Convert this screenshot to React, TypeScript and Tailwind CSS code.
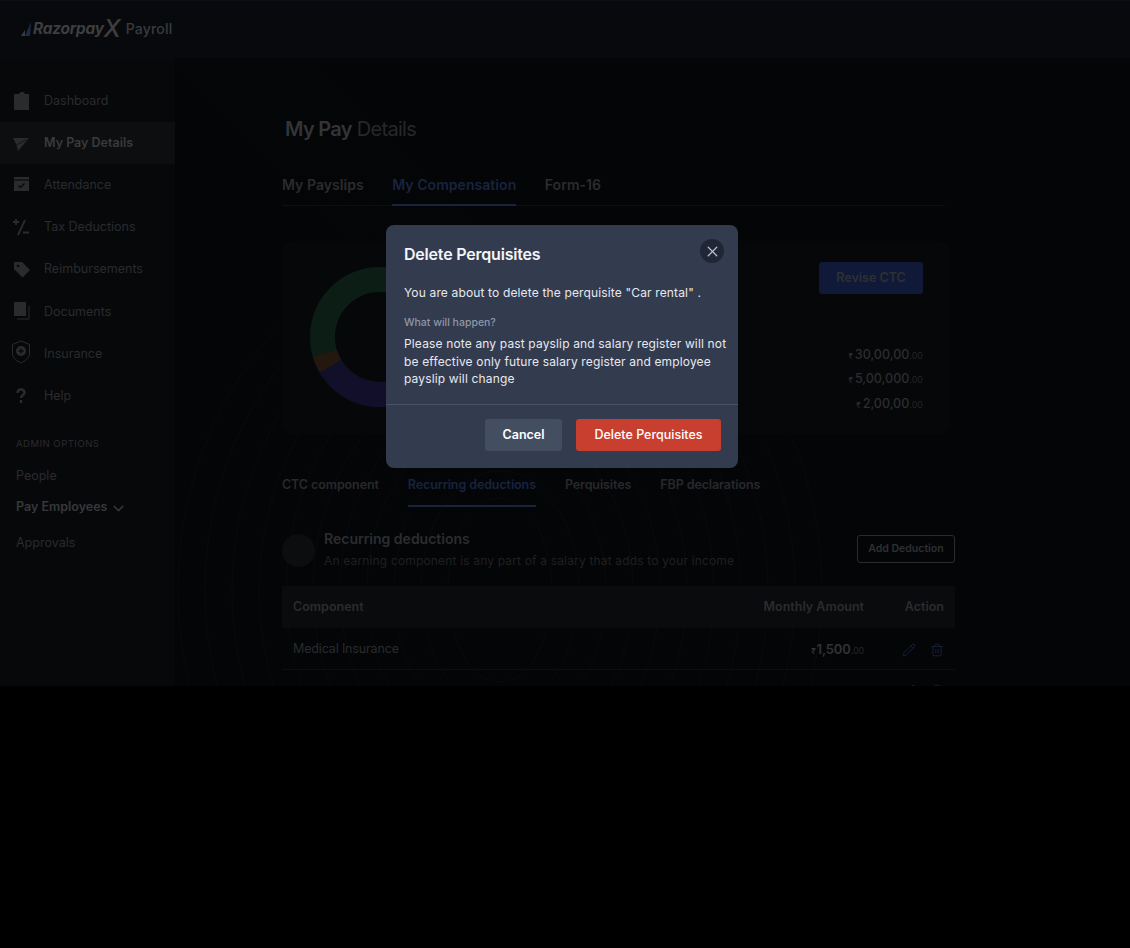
import { Pencil, Trash2, X, ChevronDown } from "lucide-react";

const NAV = [
  { label: "Dashboard", icon: "clipboard" },
  { label: "My Pay Details", icon: "plane", active: true },
  { label: "Attendance", icon: "calendar" },
  { label: "Tax Deductions", icon: "tax" },
  { label: "Reimbursements", icon: "tag" },
  { label: "Documents", icon: "docs" },
  { label: "Insurance", icon: "shield" },
  { label: "Help", icon: "help" },
];

const AMOUNTS = [
  { value: "30,00,00" },
  { value: "5,00,000" },
  { value: "2,00,00" },
];

const RINGS = [322, 295, 268, 241, 214, 187, 160, 133, 106, 79, 52];
const HATCH = [0, 14, 28, 42, 56, 70, 84, 98, 112, 126];

function NavIcon({ name }: { name: string }) {
  const c = "#2a2b2d";
  return (
    <svg width="22" height="22" viewBox="0 0 22 22" fill="none" className="overflow-visible">
      {name === "clipboard" && <path d="M3 4h5l1.500-2h3L14 4h4v16H3z" fill={c} />}
      {name === "plane" && (
        <>
          <path d="M2 6h16L7 19l-1.500-6z" fill={c} />
          <path d="M5.500 13L15 7.500" stroke="#0d0e10" strokeWidth="0.8" />
        </>
      )}
      {name === "calendar" && (
        <>
          <path d="M3 3h15v14H3z" fill={c} />
          <path d="M3 6h15" stroke="#08090b" strokeWidth="1.200" />
          <path d="M7.500 11.500l2 2 4-4" stroke="#08090b" strokeWidth="1.400" />
        </>
      )}
      {name === "tax" && <path d="M2 5h6M5 2v6M14 3L7 18M12 15.500h6" stroke={c} strokeWidth="1.800" />}
      {name === "tag" && (
        <>
          <path d="M3 3h8l8 8-7.500 7.500L3 10z" fill={c} />
          <circle cx="7" cy="7" r="1.300" fill="#08090b" />
        </>
      )}
      {name === "docs" && (
        <>
          <path d="M3 1h12v14H3z" fill={c} />
          <path d="M18 5v13H6" stroke={c} strokeWidth="1" />
        </>
      )}
      {name === "shield" && (
        <>
          <path d="M10 -2l8.500 3.500v9c0 4.500-4.500 7.500-8.500 9.500-4-2-8.500-5-8.500-9.500v-9z" stroke={c} strokeWidth="1" />
          <circle cx="10" cy="8" r="5" fill={c} />
          <path d="M10 5.500v5M7.500 8h5" stroke="#08090b" strokeWidth="1.300" />
        </>
      )}
      {name === "help" && (
        <path d="M6.500 8c0-2.500 1.500-3.500 3.500-3.500s3.500 1.200 3.500 3.300c0 2.500-3.500 2.500-3.500 5.200M10 15v3" stroke={c} strokeWidth="2.400" />
      )}
    </svg>
  );
}

function Amount({ value }: { value: string }) {
  return (
    <div className="h-[24.500px] flex items-baseline justify-end text-[#2c2d2f] font-medium text-[12.500px] leading-[24.500px]">
      <span className="text-[8px] mr-[2px]">₹</span>
      <span>{value}</span>
      <span className="text-[9px] font-normal text-[#242527]">.00</span>
    </div>
  );
}

export default function App() {
  return (
    <div className="relative h-[948px] bg-black overflow-hidden font-['Inter',sans-serif]">
      <div className="h-[686px] overflow-hidden bg-[#040507] flex flex-col">
        <header className="h-[58px] shrink-0 bg-[#08090c] border-t border-[#0c0e15] flex items-center pl-[21px] pb-[2px]">
          <svg width="11" height="16" viewBox="0 0 11 16" className="mr-[1px]">
            <path d="M0 15l4-6v6z" fill="#3a3b3e" />
            <path d="M4 15L10 1l-1 14z" fill="#1e2b44" />
          </svg>
          <span className="text-[15.400px] font-bold italic text-[#3d3e40] tracking-[-0.2px]">Razorpay</span>
          <span className="text-[24px] leading-none font-medium italic text-[#3d3e40] mr-[5px]">X</span>
          <span className="text-[14px] font-medium text-[#3a3b3d] tracking-[0.2px]">Payroll</span>
        </header>
        <div className="flex flex-1 min-h-0">
          <aside className="w-[175px] shrink-0 bg-[#07080a] pt-[22px]">
            <nav>
              {NAV.map((item) => (
                <div
                  key={item.label}
                  className={`h-[42.200px] flex items-center pl-[11px] gap-[11px] text-[12.500px] ${
                    item.active ? "bg-[#0d0e10] text-[#3a3b3d] font-semibold" : "text-[#2a2b2d]"
                  }`}
                >
                  <NavIcon name={item.icon} />
                  <span>{item.label}</span>
                </div>
              ))}
            </nav>
            <div className="pl-[16px] pt-[18px] text-[#2a2b2d]">
              <p className="text-[9.500px] tracking-[0.5px] leading-[16px]">ADMIN OPTIONS</p>
              <p className="text-[12.500px] mt-[16px] leading-[16px]">People</p>
              <div className="flex items-center mt-[16px] h-[16px] gap-[3px] font-semibold text-[12.500px] text-[#37383a]">
                Pay Employees <ChevronDown size={17} strokeWidth={2} className="mt-[2px]" />
              </div>
              <p className="text-[12.500px] mt-[19px] leading-[16px]">Approvals</p>
            </div>
          </aside>
          <main className="relative flex-1 pl-[107px] overflow-hidden">
            <svg className="absolute inset-0 w-full h-full" viewBox="0 0 955 628" fill="none" stroke="#090a0c">
              {RINGS.map((r) => (
                <ellipse key={r} cx="325" cy="532" rx={r} ry={r + 40} />
              ))}
              {HATCH.map((d) => (
                <path key={d} d={`M${d} 0L${d + 180} 180`} stroke="#08090b" strokeWidth="0.600" />
              ))}
            </svg>
            <div className="relative w-[673px]">
              <h1 className="pt-[57px] pl-[3px] text-[20px] leading-[28px] tracking-[-0.7px] text-[#27282a]">
                <span className="font-semibold text-[#333436]">My Pay</span> Details
              </h1>
              <div className="mt-[27px] w-[663px] flex gap-[28.500px] border-b border-[#0e0f12] h-[36px] text-[14px] font-semibold tracking-[0.05px] text-[#2b2c2e]">
                <span className="pt-[4px]">My Payslips</span>
                <span className="pt-[4px] h-[36px] text-[#19233e] border-b-2 border-[#19233e]">My Compensation</span>
                <span className="pt-[4px]">Form-16</span>
              </div>
              <section className="mt-[35px] w-[668px] h-[193px] rounded-[10px] bg-[#060709] flex justify-between pl-[28px] pr-[27px] pt-[21px]">
                <div className="pt-[5px]">
                  <svg width="140" height="140" viewBox="0 0 140 140" fill="none">
                    <circle cx="70" cy="70" r="57.500" stroke="#0b1d14" strokeWidth="25" />
                    <path d="M20.460 99.180A57.500 57.500 0 0 0 90 123.900" stroke="#120f2a" strokeWidth="25" />
                    <path d="M14.870 86.330A57.500 57.500 0 0 0 20.460 99.180" stroke="#24180e" strokeWidth="25" />
                  </svg>
                </div>
                <div className="flex flex-col items-end">
                  <button className="w-[104px] h-[32px] rounded-[3px] bg-[#101a38] text-[12.500px] font-semibold text-[#2f3033]">Revise CTC</button>
                  <div className="mt-[48.500px] w-[120px]">
                    {AMOUNTS.map((a) => (
                      <Amount key={a.value} value={a.value} />
                    ))}
                  </div>
                </div>
              </section>
              <div className="mt-[33px] flex gap-[29px] h-[40px] text-[12.500px] font-semibold tracking-[-0.1px] text-[#28292b]">
                <span className="pt-[9px]">CTC component</span>
                <span className="pt-[9px] text-[#19233e] border-b-2 border-[#19233e]">Recurring deductions</span>
                <span className="pt-[9px]">Perquisites</span>
                <span className="pt-[9px]">FBP declarations</span>
              </div>
              <div className="mt-[21px] h-[44px] flex items-center">
                <div className="w-[33px] h-[33px] rounded-full bg-[#0c0d0f] mr-[9px]" />
                <div className="flex-1">
                  <p className="text-[14px] font-semibold text-[#2c2d2f] leading-[20px]">Recurring deductions</p>
                  <p className="text-[12px] text-[#1f2022] leading-[23px] tracking-[0.165px]">An earning component is any part of a salary that adds to your income</p>
                </div>
                <button className="w-[98px] h-[28px] -mt-[2px] rounded-[3px] border border-[#2a2b2d] text-[10.500px] font-semibold text-[#2f3032]">Add Deduction</button>
              </div>
              <div className="mt-[14px] h-[42px] bg-[#0a0b0d] flex items-center px-[11px] pt-[1px] text-[12.500px] font-semibold text-[#2b2c2e]">
                <span className="flex-1">Component</span>
                <span className="w-[110px] text-right">Monthly Amount</span>
                <span className="w-[80px] text-right">Action</span>
              </div>
              <div className="h-[42px] flex items-center px-[11px] pt-[2px] border-b border-[#0d0e10] text-[12.500px] tracking-[-0.15px] text-[#2a2b2d]">
                <span className="flex-1">Medical Insurance</span>
                <span className="flex items-baseline w-[110px] justify-end text-[13px] font-semibold text-[#323335]">
                  <span className="text-[8px] mr-[1px]">₹</span>1,500<span className="text-[9px] font-normal text-[#242527]">.00</span>
                </span>
                <span className="w-[80px] flex justify-end gap-[14px] text-[#19233e]">
                  <Pencil size={14} strokeWidth={1.500} />
                  <Trash2 size={14} strokeWidth={1.500} />
                </span>
              </div>
              <div className="h-[42px] flex items-center justify-end px-[11px] gap-[14px] text-[#19233e]">
                <Pencil size={14} strokeWidth={1.500} />
                <Trash2 size={14} strokeWidth={1.500} />
              </div>
            </div>
          </main>
        </div>
      </div>

      <div className="absolute left-[386px] top-[225px] w-[352px] h-[243px] rounded-[8px] bg-[#333b4f] text-[#e7e9ee]">
        <button className="absolute right-[14px] top-[14px] w-[24px] h-[24px] rounded-full bg-[#1f2635] flex items-center justify-center text-[#b9bdc6]">
          <X size={17} strokeWidth={1.800} />
        </button>
        <div className="h-[180px] border-b border-[#48506a] pl-[18px] pr-[10px] pt-[19px]">
          <h2 className="text-[16px] leading-[20px] font-semibold tracking-[-0.2px] text-[#f4f5f7]">Delete Perquisites</h2>
          <p className="mt-[19px] text-[12px] leading-[20px] tracking-[0.15px]">You are about to delete the perquisite "Car rental" .</p>
          <p className="mt-[12px] text-[10.500px] leading-[16px] font-medium text-[#9096a6]">What will happen?</p>
          <p className="mt-[4px] text-[12px] leading-[17.600px] tracking-[0.15px]">
            Please note any past payslip and salary register will not be effective only future salary register and employee payslip will change
          </p>
        </div>
        <div className="flex justify-end gap-[14px] pt-[14px] pr-[17px]">
          <button className="w-[77px] h-[32px] rounded-[3px] bg-[#434e60] text-[12.500px] font-semibold text-white">Cancel</button>
          <button className="w-[145px] h-[32px] rounded-[3px] bg-[#c93f2f] text-[12.500px] font-medium text-white">Delete Perquisites</button>
        </div>
      </div>
    </div>
  );
}
